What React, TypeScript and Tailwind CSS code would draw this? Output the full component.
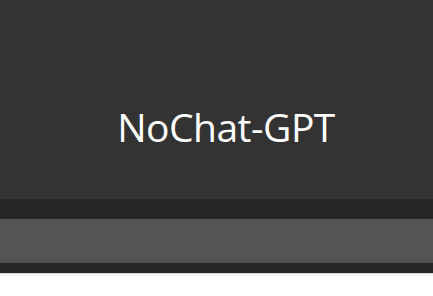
export default function App() {
  return (
    <div className="w-[433px] h-[296px] bg-white flex flex-col">
      {/* Header */}
      <div className="h-[199px] bg-[#333333] flex items-center justify-center pl-[19px] pt-[54px]">
        <h1 className="text-[39px] text-white font-['Open_Sans',sans-serif] leading-none tracking-[-0.5px]">
          NoChat-GPT
        </h1>
      </div>
      <div className="h-[20px] bg-[#252525]" />
      <div className="h-[44px] bg-[#555555] bg-gradient-to-b from-[#555555] from-80% to-[#4f4f4f]" />
      <div className="h-[10px] bg-[#252525]" />
      <div className="h-[1px] bg-[#d4d4d4]" />
      <div className="h-[2px] bg-[#f3f3f3]" />
    </div>
  );
}
